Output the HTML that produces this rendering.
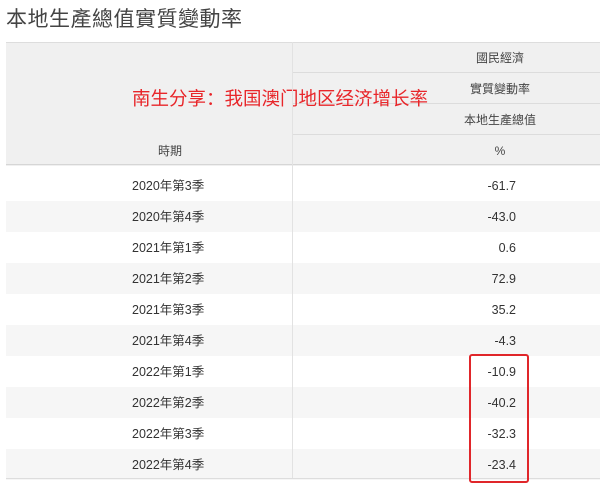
<!DOCTYPE html>
<html><head><meta charset="utf-8"><style>
body{margin:0;width:600px;height:490px;background:#fff;font-family:"Liberation Sans","Noto Sans CJK TC",sans-serif;position:relative;overflow:hidden;color:#333}
.t{position:absolute;left:6px;top:3px;font-size:21px;color:#444;letter-spacing:0.5px}
.hd{position:absolute;left:6px;top:42px;width:594px;height:123px;background:#f0f0f0;border-top:1px solid #ddd}
.vl{position:absolute;left:292px;top:42px;width:1px;height:436px;background:#e2e2e2}
.hr{position:absolute;left:293px;width:307px;height:1px;background:#dcdcdc}
.c{position:absolute;font-size:12px;color:#444;text-align:center;line-height:14px}
.row{position:absolute;left:6px;width:594px;height:31px;font-size:12.5px;color:#333}
.row span{position:absolute;top:9px;line-height:14px}
.g{background:#f6f6f6}
.red{position:absolute;left:132px;top:88px;font-size:18.5px;line-height:22px;color:#e8262a;font-family:"Liberation Sans","Noto Sans CJK SC",sans-serif}
.box{position:absolute;left:469px;top:354px;width:56px;height:125px;border:2px solid #e0262a;border-radius:3px}
</style></head><body>
<div class="t">本地生產總值實質變動率</div>
<div class="hd"></div>
<div class="hr" style="top:72px"></div>
<div class="hr" style="top:103px"></div>
<div class="hr" style="top:134px"></div>
<div style="position:absolute;left:6px;top:164px;width:594px;height:1px;background:#d6d6d6"></div>
<div class="c" style="left:440px;width:120px;top:51px">國民經濟</div>
<div class="c" style="left:440px;width:120px;top:82px">實質變動率</div>
<div class="c" style="left:440px;width:120px;top:113px">本地生產總值</div>
<div class="c" style="left:440px;width:120px;top:144px">%</div>
<div class="c" style="left:110px;width:120px;top:144px">時期</div>
<div class="red">南生分享：我国澳门地区经济增长率</div>
<div class="row" style="top:170px"><span style="left:126px">2020年第3季</span><span style="right:84px">-61.7</span></div>
<div class="row g" style="top:201px"><span style="left:126px">2020年第4季</span><span style="right:84px">-43.0</span></div>
<div class="row" style="top:232px"><span style="left:126px">2021年第1季</span><span style="right:84px">0.6</span></div>
<div class="row g" style="top:263px"><span style="left:126px">2021年第2季</span><span style="right:84px">72.9</span></div>
<div class="row" style="top:294px"><span style="left:126px">2021年第3季</span><span style="right:84px">35.2</span></div>
<div class="row g" style="top:325px"><span style="left:126px">2021年第4季</span><span style="right:84px">-4.3</span></div>
<div class="row" style="top:356px"><span style="left:126px">2022年第1季</span><span style="right:84px">-10.9</span></div>
<div class="row g" style="top:387px"><span style="left:126px">2022年第2季</span><span style="right:84px">-40.2</span></div>
<div class="row" style="top:418px"><span style="left:126px">2022年第3季</span><span style="right:84px">-32.3</span></div>
<div class="row g" style="top:449px"><span style="left:126px">2022年第4季</span><span style="right:84px">-23.4</span></div>
<div style="position:absolute;left:6px;top:478px;width:594px;height:1px;background:#ddd"></div>
<div class="vl"></div>
<div class="box"></div>
</body></html>
